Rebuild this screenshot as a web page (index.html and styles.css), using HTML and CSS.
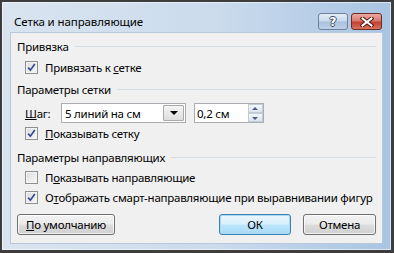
FILE: index.html
```html
<!DOCTYPE html>
<html>
<head>
  <meta charset="utf-8">
  <title>Сетка и направляющие</title>
  <link rel="stylesheet" href="styles.css">
</head>
<body>
  <div class="window">
    <div class="titlebar">
      <span class="title">Сетка и направляющие</span>
      <div class="caption-buttons">
        <span class="cap-btn help">?</span>
        <span class="cap-btn close">
          <svg width="14" height="10" viewBox="0 0 14 10">
            <path d="M2.5 1.5 L11.5 8.5 M11.5 1.5 L2.5 8.5" stroke="#4a1812" stroke-width="4" stroke-linecap="square"/>
            <path d="M2.5 1.5 L11.5 8.5 M11.5 1.5 L2.5 8.5" stroke="#fff" stroke-width="2" stroke-linecap="square"/>
          </svg>
        </span>
      </div>
    </div>
    <div class="content">
      <div class="group"><span>Привязка</span></div>
      <div class="check first">
        <span class="box checked"></span>
        <span>Привязать к <u>с</u>етке</span>
      </div>
      <div class="group second"><span>Параметры сетки</span></div>
      <div class="field-row">
        <span class="field-label"><u>Ш</u>аг:</span>
        <div class="combo">
          <span class="combo-text">5 линий на см</span>
          <span class="drop"></span>
        </div>
        <div class="spin">
          <span class="spin-text">0,2 см</span>
          <span class="arrows">
            <span class="arrow up"></span>
            <span class="arrow down"></span>
          </span>
        </div>
      </div>
      <div class="check">
        <span class="box checked"></span>
        <span><u>П</u>оказывать сетку</span>
      </div>
      <div class="group third"><span>Параметры направляющих</span></div>
      <div class="check">
        <span class="box"></span>
        <span>П<u>о</u>казывать направляющие</span>
      </div>
      <div class="check">
        <span class="box checked"></span>
        <span>О<u>т</u>ображать смарт-направляющие при выравнивании фигур</span>
      </div>
      <div class="buttons">
        <button class="btn wide"><u>П</u>о умолчанию</button>
        <span class="spacer"></span>
        <button class="btn ok">ОК</button>
        <button class="btn cancel">Отмена</button>
      </div>
    </div>
  </div>
</body>
</html>
```

FILE: styles.css
```css
body {
    margin: 0;
    font-family: "Noto Sans", "Open Sans", sans-serif;
    font-size: 11.5px;
    letter-spacing: -0.25px;
    color: #000;
    background: #3b3b3b;
}
.window {
    box-sizing: border-box;
    width: 394px;
    height: 253px;
    border: 2px solid #3d3d3d;
    border-right-width: 3px;
    border-bottom-width: 3px;
    padding: 0 8px 6px 8px;
    display: flex;
    flex-direction: column;
    background: linear-gradient(to right, #d9e4f0 0%, #cbdbec 55%, #a8c4e3 100%);
    box-shadow: inset 0 0 0 1px rgba(255, 255, 255, .55);
}
.titlebar {
    height: 30px;
    display: flex;
    align-items: flex-start;
    padding-left: 4px;
}
.title {
    margin-top: 12px;
    line-height: 16px;
    font-size: 11.5px;
    letter-spacing: -0.1px;
    color: #000;
    white-space: nowrap;
}
.caption-buttons {
    margin-left: auto;
    margin-top: 11px;
    margin-right: 1px;
    display: flex;
    gap: 3px;
}
.cap-btn {
    box-sizing: border-box;
    height: 17px;
    display: flex;
    align-items: center;
    justify-content: center;
    border-radius: 3px;
}
.help {
    width: 30px;
    border: 1px solid #6f819a;
    background: linear-gradient(#e4edf7 0%, #c8d8ea 48%, #a9c1dd 52%, #bcd1e8 100%);
    color: #fff;
    font-family: "DejaVu Sans", sans-serif;
    font-weight: bold;
    font-size: 12px;
    letter-spacing: 0;
    text-shadow: -1px 0 #3b4a5e, 1px 0 #3b4a5e, 0 -1px #3b4a5e, 0 1px #3b4a5e;
}
.close {
    width: 31px;
    border: 1px solid #6b2a23;
    background: linear-gradient(#e9a99f 0%, #d97b6f 45%, #c4402f 55%, #d8745f 100%);
}
.content {
    box-sizing: border-box;
    height: 212px;
    border: 1px solid #b7c8da;
    background: #f0f0f0;
    padding: 3px 6px 0 6px;
    display: flex;
    flex-direction: column;
    white-space: nowrap;
}
.group {
    height: 20px;
    display: flex;
    align-items: center;
    gap: 6px;
}
.group::after {
    content: "";
    flex: 1;
    height: 1px;
    background: #d5dde5;
}
.group.second {
    margin-top: 2px;
}
.group.third {
    margin-top: 4px;
}
.check {
    height: 20px;
    display: flex;
    align-items: center;
    padding-left: 8px;
    gap: 7px;
}
.check.first {
    margin-top: 1px;
}
.box {
    box-sizing: border-box;
    width: 13px;
    height: 13px;
    border: 1px solid #8e8f8f;
    background: linear-gradient(135deg, #dcdcdc, #f8f8f8);
    box-shadow: inset 0 0 0 1px #f4f4f4;
    flex: none;
}
.box.checked {
    background-color: #f4f4f4;
    background-image: url("data:image/svg+xml,%3Csvg xmlns='http://www.w3.org/2000/svg' width='11' height='11'%3E%3Cpath d='M2.2 5.6 L4.4 8.2 L8.8 2' fill='none' stroke='%23384b8f' stroke-width='1.7'/%3E%3C/svg%3E"), linear-gradient(135deg, #dcdcdc, #f8f8f8);
}
.field-row {
    margin-top: 4px;
    height: 20px;
    display: flex;
    align-items: center;
    padding-left: 8px;
}
.field-label {
    width: 36px;
}
.combo {
    box-sizing: border-box;
    width: 125px;
    height: 20px;
    border: 1px solid #abadb3;
    background: #fff;
    display: flex;
    align-items: center;
}
.combo-text {
    flex: 1;
    padding-left: 3px;
}
.drop {
    box-sizing: border-box;
    width: 21px;
    height: 16px;
    margin-right: 1px;
    border: 1px solid #a9a9a9;
    border-radius: 1px;
    background: linear-gradient(#f4f4f4, #dedede);
    position: relative;
}
.drop::after {
    content: "";
    position: absolute;
    left: 6px;
    top: 5px;
    border-left: 4px solid transparent;
    border-right: 4px solid transparent;
    border-top: 4px solid #000;
}
.spin {
    box-sizing: border-box;
    width: 70px;
    height: 20px;
    margin-left: 8px;
    border: 1px solid #abadb3;
    background: #fff;
    display: flex;
    align-items: center;
}
.spin-text {
    flex: 1;
    padding-left: 2px;
}
.arrows {
    width: 15px;
    height: 18px;
    display: flex;
    flex-direction: column;
}
.arrow {
    box-sizing: border-box;
    flex: 1;
    border: 1px solid #c3cbd8;
    background: linear-gradient(#f3f6fa, #dce4ee);
    position: relative;
}
.arrow::after {
    content: "";
    position: absolute;
    left: 3px;
    border-left: 3.5px solid transparent;
    border-right: 3.5px solid transparent;
}
.arrow.up::after {
    top: 2px;
    border-bottom: 3px solid #4d5b8a;
}
.arrow.down::after {
    top: 3px;
    border-top: 3px solid #4d5b8a;
}
.buttons {
    margin-top: 7px;
    display: flex;
    gap: 12px;
}
.spacer {
    flex: 1;
}
.btn {
    box-sizing: border-box;
    height: 21px;
    padding: 0;
    font: inherit;
    letter-spacing: inherit;
    color: #000;
    border: 1px solid #707070;
    border-radius: 3px;
    background: linear-gradient(#f2f2f2 0%, #ebebeb 48%, #dddddd 52%, #cfcfcf 100%);
    box-shadow: inset 0 0 0 1px rgba(255, 255, 255, .7);
}
.btn.wide {
    width: 98px;
}
.btn.ok {
    width: 72px;
    border-color: #3c7fb1;
    box-shadow: inset 0 0 0 1px #a8dcf6;
    background: linear-gradient(#eaf6fd 0%, #d9f0fc 48%, #bee6fd 52%, #a7d9f5 100%);
}
.btn.cancel {
    width: 73px;
}
```
